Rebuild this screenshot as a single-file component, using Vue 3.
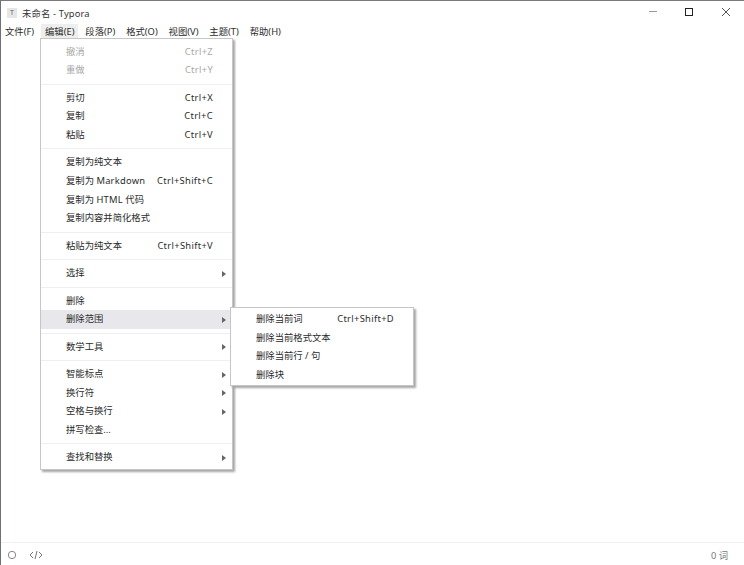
<script setup>
const groups = [
  [
    { label: '撤消', key: 'Ctrl+Z', disabled: true },
    { label: '重做', key: 'Ctrl+Y', disabled: true },
  ],
  [
    { label: '剪切', key: 'Ctrl+X' },
    { label: '复制', key: 'Ctrl+C' },
    { label: '粘贴', key: 'Ctrl+V' },
  ],
  [
    { label: '复制为纯文本' },
    { label: '复制为 ', latin: 'Markdown', key: 'Ctrl+Shift+C' },
    { label: '复制为 ', latin: 'HTML', tail: ' 代码' },
    { label: '复制内容并简化格式' },
  ],
  [{ label: '粘贴为纯文本', key: 'Ctrl+Shift+V' }],
  [{ label: '选择', sub: true }],
  [
    { label: '删除' },
    { label: '删除范围', sub: true, active: true },
  ],
  [{ label: '数学工具', sub: true }],
  [
    { label: '智能标点', sub: true },
    { label: '换行符', sub: true },
    { label: '空格与换行', sub: true },
    { label: '拼写检查...' },
  ],
  [{ label: '查找和替换', sub: true }],
]
const subItems = [
  { label: '删除当前词', key: 'Ctrl+Shift+D' },
  { label: '删除当前格式文本' },
  { label: '删除当前行 / 句' },
  { label: '删除块' },
]
const menus = ['文件(F)', '编辑(E)', '段落(P)', '格式(O)', '视图(V)', '主题(T)', '帮助(H)']
</script>

<template>
  <div class="window">
    <header class="titlebar">
      <div class="title-left">
        <span class="app-icon">T</span>
        <span class="title">未命名 - Typora</span>
      </div>
      <div class="controls">
        <svg width="36.5" height="22" viewBox="0 0 36.5 22"><path d="M14 10.5h8" stroke="#9a9a9a" fill="none" /></svg>
        <svg width="36.5" height="22" viewBox="0 0 36.5 22"><rect x="14.5" y="7.5" width="7" height="7" stroke="#222" fill="none" /></svg>
        <svg width="36.5" height="22" viewBox="0 0 36.5 22"><path d="M14 7l8 8M22 7l-8 8" stroke="#555" fill="none" /></svg>
      </div>
    </header>
    <nav class="menubar">
      <span v-for="m in menus" :key="m" class="menu-title" :class="{ open: m === '编辑(E)' }">{{ m }}</span>
    </nav>
    <main class="content">
      <div class="menu main-menu">
        <template v-for="(group, i) in groups" :key="i">
          <div v-if="i" class="sep"></div>
          <div
            v-for="item in group"
            :key="item.label + (item.latin || '')"
            class="row"
            :class="{ disabled: item.disabled, active: item.active }"
          >
            <span class="label">{{ item.label }}<span v-if="item.latin" class="latin">{{ item.latin }}</span>{{ item.tail }}</span>
            <span v-if="item.key" class="key">{{ item.key }}</span>
            <span v-if="item.sub" class="arrow"></span>
          </div>
        </template>
      </div>
      <div class="menu sub-menu">
        <div v-for="item in subItems" :key="item.label" class="row">
          <span class="label">{{ item.label }}</span>
          <span v-if="item.key" class="key">{{ item.key }}</span>
        </div>
      </div>
    </main>
    <footer class="statusbar">
      <div class="status-left">
        <svg width="10" height="10" viewBox="0 0 10 10"><circle cx="5" cy="5" r="3.7" stroke="#888" fill="none" /></svg>
        <svg width="14" height="10" viewBox="0 0 14 10"><path d="M4 2L1 5l3 3M10 2l3 3-3 3M8 1L6 9" stroke="#777" fill="none" /></svg>
      </div>
      <span class="count">0 词</span>
    </footer>
  </div>
</template>

<style>
html, body { margin: 0; background: #fff; }
</style>

<style scoped>
.window {
  width: 744px;
  height: 565px;
  box-sizing: border-box;
  border-top: 1px solid #7a7a7a;
  border-left: 1px solid #6f6f78;
  display: flex;
  flex-direction: column;
  background: #fff;
  color: #333;
  font-family: "Noto Sans", "Noto Sans CJK SC", sans-serif;
  font-size: 9.33px;
  overflow: hidden;
}
.titlebar {
  height: 22px;
  display: flex;
  justify-content: space-between;
  flex: none;
}
.title-left {
  display: flex;
  align-items: center;
  padding: 2px 0 0 6px;
  gap: 5px;
}
.app-icon {
  width: 10px;
  height: 10px;
  background: #e6e6e6;
  color: #666;
  font-size: 7px;
  line-height: 10px;
  text-align: center;
}
.title { color: #333; letter-spacing: 0.15px; }
.controls { display: flex; }
.menubar {
  display: flex;
  height: 15px;
  flex: none;
  align-items: stretch;
}
.menu-title {
  padding: 0 4px;
  margin-right: 2.9px;
  height: 14px;
  margin-top: 1px;
  line-height: 16px;
  color: #2b2b2b;
}
.menu-title.open { background: #eeeeee; }
.content { flex: 1; position: relative; }
.menu {
  position: absolute;
  background: #fff;
  box-sizing: border-box;
  border: 1px solid #c6c6c6;
  box-shadow: 2px 2px 2px #a6a6a6;
  color: #2b2b2b;
}
.main-menu {
  left: 39px;
  top: 0;
  width: 193px;
  padding: 3.6px 0 2.4px;
}
.sub-menu {
  left: 229px;
  top: 269px;
  width: 184px;
  padding: 2px 0 0.6px;
}
.row {
  height: 18.6px;
  line-height: 18.6px;
  padding-left: 25px;
  position: relative;
  white-space: nowrap;
}
.row.active { background: #e8e8ec; }
.row.disabled { color: #a8a8a8; }
.key { position: absolute; right: 19px; top: 0; letter-spacing: 0.33px; }
.latin { letter-spacing: 0.25px; }
.arrow {
  position: absolute;
  right: 6px;
  top: 6.5px;
  border-left: 4px solid #666;
  border-top: 3px solid transparent;
  border-bottom: 3px solid transparent;
}
.sep {
  height: 1px;
  background: #efefef;
  margin: 3.95px 0;
}
.statusbar {
  height: 21px;
  flex: none;
  border-top: 1px solid #f0f0f0;
  display: flex;
  justify-content: space-between;
  align-items: center;
  padding: 1px 16px 0 6px;
  color: #777;
}
.status-left { display: flex; gap: 12px; align-items: center; }
</style>
